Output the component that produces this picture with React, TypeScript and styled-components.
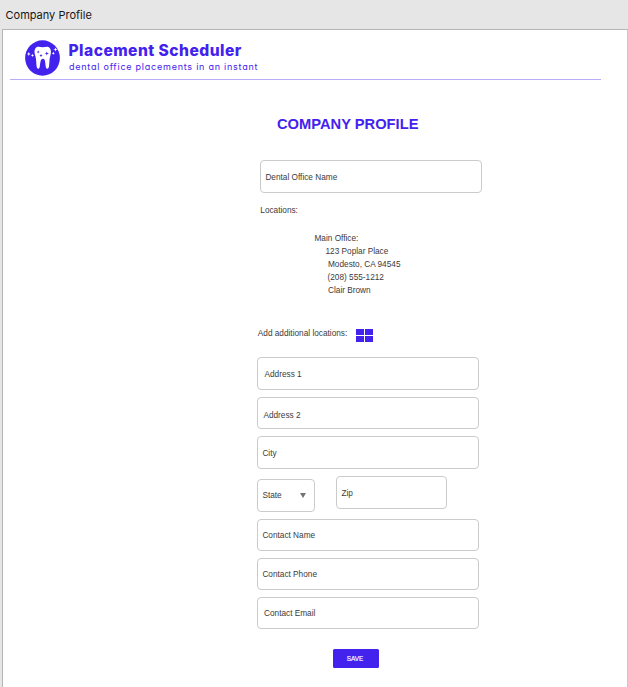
import React from 'react';
import styled, { createGlobalStyle } from 'styled-components';

const accent = '#4322ee';

const GlobalStyle = createGlobalStyle`
  * { box-sizing: border-box; }
  html, body { margin: 0; padding: 0; }
  body {
    background: #e6e6e6;
    font-family: "Liberation Sans", Arial, sans-serif;
    overflow: hidden;
  }
`;

const Page = styled.div`
  display: flex;
  flex-direction: column;
  width: 628px;
  height: 687px;
  padding-left: 2px;
  overflow: hidden;
`;

const TitleBar = styled.div`
  flex: none;
  height: 29px;
  padding: 1px 0 0 3.5px;
  font: 400 11px/29px Inter, sans-serif;
  letter-spacing: 0;
  color: #161616;
`;

const Frame = styled.main`
  flex: 1;
  min-height: 0;
  background: #fff;
  border: 1px solid #b5b5b5;
  border-right-color: #c8c8c8;
  border-bottom: 0;
`;

const Header = styled.header`
  display: flex;
  width: 591px;
  height: 50px;
  margin-left: 7px;
  padding: 10px 0 0 15px;
  border-bottom: 1px solid #b9adfa;
`;

const Brand = styled.div`
  margin-left: 8px;
  color: ${accent};
  white-space: nowrap;
`;

const BrandName = styled.div`
  margin: 1px 0 0 0.5px;
  font: 800 15.6px/19px Inter, sans-serif;
  letter-spacing: 0.46px;
`;

const Tagline = styled.div`
  margin: 0 0 0 1px;
  font: 400 9px/13px Inter, sans-serif;
  letter-spacing: 0.76px;
  font-feature-settings: "cv11";
`;

const Form = styled.form`
  display: flex;
  flex-direction: column;
  align-items: flex-start;
  margin-left: 254px;
  font-size: 8.25px;
  line-height: 13px;
  color: #3b3b3b;
  white-space: nowrap;
`;

const Heading = styled.h1`
  margin: 34px 0 0 20px;
  font-size: 14.7px;
  line-height: 20px;
  font-weight: 700;
  color: ${accent};
`;

const Field = styled.div<{
  $width?: number;
  $height?: number;
  $top?: number;
  $left?: number;
  $inset?: number;
  $drop?: number;
}>`
  display: flex;
  align-items: center;
  flex: none;
  width: ${p => p.$width ?? 222}px;
  height: ${p => p.$height ?? 33}px;
  margin: ${p => p.$top ?? 0}px 0 0 ${p => p.$left ?? 0}px;
  padding: ${p => p.$drop ?? 0}px 0 0 ${p => p.$inset ?? 4.4}px;
  border: 1px solid #cbcbcb;
  border-radius: 4px;
`;

const LocationsLabel = styled.div`
  margin: 11px 0 0 3.3px;
`;

const Address = styled.address`
  margin: 15px 0 0 57.5px;
  font-style: normal;
`;

const AddressLine = styled.div<{ $indent?: number }>`
  padding-left: ${p => p.$indent ?? 0}px;
`;

const AddRow = styled.div`
  display: flex;
  height: 17px;
  margin: 30px 0 0 0.8px;
`;

const AddIcon = styled.div`
  display: grid;
  grid-template-columns: 8px 8px;
  grid-template-rows: 6px 6px;
  gap: 1px;
  margin: 2px 0 0 8.7px;
`;

const Tile = styled.i`
  background: ${accent};
`;

const SplitRow = styled.div`
  display: flex;
  align-items: flex-start;
  height: 36px;
  margin-top: 7px;
`;

const Arrow = styled.svg`
  margin-left: 18px;
`;

const SaveButton = styled.button`
  width: 46px;
  height: 19px;
  margin: 20px 0 0 76px;
  padding: 0 2px 0 0;
  border: 0;
  border-radius: 1.5px;
  background: ${accent};
  color: #fff;
  font: 400 6.4px/19px "Liberation Sans", Arial, sans-serif;
  -webkit-text-stroke: 0.15px #fff;
`;

const ToothLogo = () => (
  <svg width="35" height="36" viewBox="0 0 35 36">
    <ellipse cx="17.5" cy="18" rx="17.4" ry="17.7" fill={accent} />
    <path
      d="M10.600 8c2-2.200 4.600-.8 7.100-.7 2.500-.1 5.200-1.500 7.100.7 1.800 2.400 1.200 5.600.4 8.300-.9 3-.7 6.200-1.100 9.400-.3 3.700-2.800 4.100-3.400.7-.5-3-.2-7.600-2.800-7.600s-2.600 4.600-3.100 7.600c-.6 3.400-2.900 3-3.300-.7-.3-3.200-.2-6.400-1.100-9.400-.9-2.700-1.600-5.900.2-8.300z"
      fill="#fff"
    />
    <g fill={accent}>
      <path d="M13.200 10.600l.4 1 1 .4-1 .4-.4 1-.4-1-1-.4 1-.4z" />
      <path d="M21.800 11.400l.6 1.500 1.500.6-1.500.6-.6 1.500-.6-1.500-1.500-.6 1.500-.6z" />
      <path d="M16 14l.5 1.100 1.100.5-1.100.5-.5 1.100-.5-1.100-1.100-.5 1.100-.5z" />
    </g>
    <g fill="#fff">
      <path d="M3.800 12l.6 1.400 1.400.6-1.400.6-.6 1.400-.6-1.400-1.400-.6 1.400-.6z" />
      <path d="M7.500 13.800l.5 1.100 1.100.5-1.100.5-.5 1.100-.5-1.100-1.100-.5 1.100-.5z" />
      <path d="M30.500 7.400l.6 1.500 1.500.6-1.500.6-.6 1.500-.6-1.500-1.500-.6 1.500-.6z" />
      <path d="M28.300 11.700l.5 1.100 1.100.5-1.100.5-.5 1.100-.5-1.100-1.100-.5 1.100-.5z" />
    </g>
  </svg>
);

export default function App() {
  return (
    <>
      <GlobalStyle />
      <Page>
        <TitleBar>Company Profile</TitleBar>
        <Frame>
          <Header>
            <ToothLogo />
            <Brand>
              <BrandName>Placement Scheduler</BrandName>
              <Tagline>dental office placements in an instant</Tagline>
            </Brand>
          </Header>
          <Form>
            <Heading>COMPANY PROFILE</Heading>
            <Field $top={26} $left={3} $drop={2}>Dental Office Name</Field>
            <LocationsLabel>Locations:</LocationsLabel>
            <Address>
              <AddressLine>Main Office:</AddressLine>
              <AddressLine $indent={11}>123 Poplar Place</AddressLine>
              <AddressLine $indent={13.5}>Modesto, CA 94545</AddressLine>
              <AddressLine $indent={13}>(208) 555-1212</AddressLine>
              <AddressLine $indent={13.5}>Clair Brown</AddressLine>
            </Address>
            <AddRow>
              Add additional locations:
              <AddIcon>
                <Tile />
                <Tile />
                <Tile />
                <Tile />
              </AddIcon>
            </AddRow>
            <Field $top={13} $inset={6.5} $drop={1}>Address 1</Field>
            <Field $top={7} $height={32} $inset={5.4} $drop={4}>Address 2</Field>
            <Field $top={7} $drop={2}>City</Field>
            <SplitRow>
              <Field $width={58} $top={3}>
                State
                <Arrow width="6" height="5" viewBox="0 0 6 5">
                  <path d="M0 0h6L3 5z" fill="#737373" />
                </Arrow>
              </Field>
              <Field $width={111} $left={21} $drop={2}>Zip</Field>
            </SplitRow>
            <Field $top={7} $height={32}>Contact Name</Field>
            <Field $top={7} $height={32}>Contact Phone</Field>
            <Field $top={7} $height={32} $inset={6}>Contact Email</Field>
            <SaveButton type="button">SAVE</SaveButton>
          </Form>
        </Frame>
      </Page>
    </>
  );
}
